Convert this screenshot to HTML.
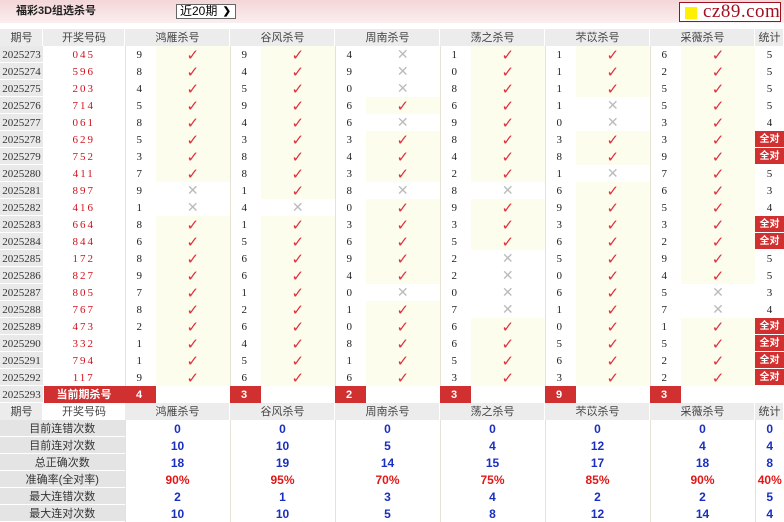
<!DOCTYPE html>
<html><head><meta charset="utf-8"><style>
*{margin:0;padding:0;box-sizing:border-box}
body{width:784px;height:519px;overflow:hidden;background:#fff;position:relative;font-family:"Liberation Serif","Noto Sans CJK SC",serif}
.bar{position:absolute;left:0;top:0;width:784px;height:23px;background:linear-gradient(#f4d6d7,#fbeeee)}
.tt{position:absolute;left:16px;top:4px;font:bold 11px/14px "Liberation Sans","Noto Sans CJK SC",sans-serif;color:#222}
.sel{position:absolute;left:176px;top:4px;width:60px;height:15px;border:1px solid #666;background:#fff;font:12px/13px "Liberation Sans","Noto Sans CJK SC",sans-serif;padding-left:3px}
.sel b{position:absolute;right:4px;top:0;font-size:10px}
.logo{position:absolute;left:679px;top:2px;width:102px;height:20px;border:1px solid #a01020;background:#fff;font:19px/18px "Liberation Serif",serif;color:#a01020;padding-left:23px;letter-spacing:0.5px}
.logo i{position:absolute;left:5px;top:4px;width:12px;height:12px;background:#ffef00}
table{position:absolute;left:0;top:29px;border-collapse:collapse;table-layout:fixed;width:784px}
tr{height:17px}
td{height:17px;max-height:17px;line-height:16px;padding:0;text-align:center;font-size:11px;color:#222;white-space:nowrap;overflow:hidden}
.h td{background:#ececec;box-shadow:inset -1px 0 #fff;font-family:"Liberation Sans","Noto Sans CJK SC",sans-serif;color:#444}
.p{background:#e9e9e9;box-shadow:inset 0 -1px #fff;color:#333}
.k{color:#d0101a;letter-spacing:2px}
.n{border-left:1px solid #e6e3d6;text-align:left;padding-left:11px}
.y{background:#fdfdee;color:#e0303c;font:15px/16px "DejaVu Sans",sans-serif}
.w{color:#bbb;font:14px/16px "DejaVu Sans",sans-serif}
.a{background:#d03030;color:#fff;font:bold 10px/16px "Liberation Sans","Noto Sans CJK SC",sans-serif;box-shadow:inset 0 -1px #fff}
.cur{background:#d03030;color:#fff;font:bold 11px/16px "Liberation Sans","Noto Sans CJK SC",sans-serif;box-shadow:inset 1px 0 #fff}
.cn{background:#d03030;color:#fff;font:bold 11px/16px "Liberation Sans",sans-serif;text-align:left;padding-left:11px}
.l{background:#e4e4e4;box-shadow:inset 0 -1px #fff;font-family:"Liberation Sans","Noto Sans CJK SC",sans-serif;color:#333}
.v{font:bold 12px/16px "Liberation Sans",sans-serif;color:#1a2fc0;border-left:1px solid #e6e3d6}
.r{color:#e01818}
</style></head><body>
<div class="bar"></div>
<div class="tt">福彩3D组选杀号</div>
<div class="sel">近20期<b>&#10095;</b></div>
<div class="logo"><i></i>cz89.com</div>
<table>
<colgroup><col style="width:43px"><col style="width:82px">
<col style="width:31px"><col style="width:74px"><col style="width:31px"><col style="width:74px"><col style="width:31px"><col style="width:74px"><col style="width:31px"><col style="width:74px"><col style="width:31px"><col style="width:74px"><col style="width:31px"><col style="width:74px"><col style="width:29px"></colgroup>
<tr class="h"><td>期号</td><td>开奖号码</td><td colspan="2">鸿雁杀号</td><td colspan="2">谷风杀号</td><td colspan="2">周南杀号</td><td colspan="2">荡之杀号</td><td colspan="2">芣苡杀号</td><td colspan="2">采薇杀号</td><td>统计</td></tr>
<tr><td class="p">2025273</td><td class="k">045</td><td class="n">9</td><td class="y">✓</td><td class="n">9</td><td class="y">✓</td><td class="n">4</td><td class="w">✕</td><td class="n">1</td><td class="y">✓</td><td class="n">1</td><td class="y">✓</td><td class="n">6</td><td class="y">✓</td><td>5</td></tr>
<tr><td class="p">2025274</td><td class="k">596</td><td class="n">8</td><td class="y">✓</td><td class="n">4</td><td class="y">✓</td><td class="n">9</td><td class="w">✕</td><td class="n">0</td><td class="y">✓</td><td class="n">1</td><td class="y">✓</td><td class="n">2</td><td class="y">✓</td><td>5</td></tr>
<tr><td class="p">2025275</td><td class="k">203</td><td class="n">4</td><td class="y">✓</td><td class="n">5</td><td class="y">✓</td><td class="n">0</td><td class="w">✕</td><td class="n">8</td><td class="y">✓</td><td class="n">1</td><td class="y">✓</td><td class="n">5</td><td class="y">✓</td><td>5</td></tr>
<tr><td class="p">2025276</td><td class="k">714</td><td class="n">5</td><td class="y">✓</td><td class="n">9</td><td class="y">✓</td><td class="n">6</td><td class="y">✓</td><td class="n">6</td><td class="y">✓</td><td class="n">1</td><td class="w">✕</td><td class="n">5</td><td class="y">✓</td><td>5</td></tr>
<tr><td class="p">2025277</td><td class="k">061</td><td class="n">8</td><td class="y">✓</td><td class="n">4</td><td class="y">✓</td><td class="n">6</td><td class="w">✕</td><td class="n">9</td><td class="y">✓</td><td class="n">0</td><td class="w">✕</td><td class="n">3</td><td class="y">✓</td><td>4</td></tr>
<tr><td class="p">2025278</td><td class="k">629</td><td class="n">5</td><td class="y">✓</td><td class="n">3</td><td class="y">✓</td><td class="n">3</td><td class="y">✓</td><td class="n">8</td><td class="y">✓</td><td class="n">3</td><td class="y">✓</td><td class="n">3</td><td class="y">✓</td><td class="a">全对</td></tr>
<tr><td class="p">2025279</td><td class="k">752</td><td class="n">3</td><td class="y">✓</td><td class="n">8</td><td class="y">✓</td><td class="n">4</td><td class="y">✓</td><td class="n">4</td><td class="y">✓</td><td class="n">8</td><td class="y">✓</td><td class="n">9</td><td class="y">✓</td><td class="a">全对</td></tr>
<tr><td class="p">2025280</td><td class="k">411</td><td class="n">7</td><td class="y">✓</td><td class="n">8</td><td class="y">✓</td><td class="n">3</td><td class="y">✓</td><td class="n">2</td><td class="y">✓</td><td class="n">1</td><td class="w">✕</td><td class="n">7</td><td class="y">✓</td><td>5</td></tr>
<tr><td class="p">2025281</td><td class="k">897</td><td class="n">9</td><td class="w">✕</td><td class="n">1</td><td class="y">✓</td><td class="n">8</td><td class="w">✕</td><td class="n">8</td><td class="w">✕</td><td class="n">6</td><td class="y">✓</td><td class="n">6</td><td class="y">✓</td><td>3</td></tr>
<tr><td class="p">2025282</td><td class="k">416</td><td class="n">1</td><td class="w">✕</td><td class="n">4</td><td class="w">✕</td><td class="n">0</td><td class="y">✓</td><td class="n">9</td><td class="y">✓</td><td class="n">9</td><td class="y">✓</td><td class="n">5</td><td class="y">✓</td><td>4</td></tr>
<tr><td class="p">2025283</td><td class="k">664</td><td class="n">8</td><td class="y">✓</td><td class="n">1</td><td class="y">✓</td><td class="n">3</td><td class="y">✓</td><td class="n">3</td><td class="y">✓</td><td class="n">3</td><td class="y">✓</td><td class="n">3</td><td class="y">✓</td><td class="a">全对</td></tr>
<tr><td class="p">2025284</td><td class="k">844</td><td class="n">6</td><td class="y">✓</td><td class="n">5</td><td class="y">✓</td><td class="n">6</td><td class="y">✓</td><td class="n">5</td><td class="y">✓</td><td class="n">6</td><td class="y">✓</td><td class="n">2</td><td class="y">✓</td><td class="a">全对</td></tr>
<tr><td class="p">2025285</td><td class="k">172</td><td class="n">8</td><td class="y">✓</td><td class="n">6</td><td class="y">✓</td><td class="n">9</td><td class="y">✓</td><td class="n">2</td><td class="w">✕</td><td class="n">5</td><td class="y">✓</td><td class="n">9</td><td class="y">✓</td><td>5</td></tr>
<tr><td class="p">2025286</td><td class="k">827</td><td class="n">9</td><td class="y">✓</td><td class="n">6</td><td class="y">✓</td><td class="n">4</td><td class="y">✓</td><td class="n">2</td><td class="w">✕</td><td class="n">0</td><td class="y">✓</td><td class="n">4</td><td class="y">✓</td><td>5</td></tr>
<tr><td class="p">2025287</td><td class="k">805</td><td class="n">7</td><td class="y">✓</td><td class="n">1</td><td class="y">✓</td><td class="n">0</td><td class="w">✕</td><td class="n">0</td><td class="w">✕</td><td class="n">6</td><td class="y">✓</td><td class="n">5</td><td class="w">✕</td><td>3</td></tr>
<tr><td class="p">2025288</td><td class="k">767</td><td class="n">8</td><td class="y">✓</td><td class="n">2</td><td class="y">✓</td><td class="n">1</td><td class="y">✓</td><td class="n">7</td><td class="w">✕</td><td class="n">1</td><td class="y">✓</td><td class="n">7</td><td class="w">✕</td><td>4</td></tr>
<tr><td class="p">2025289</td><td class="k">473</td><td class="n">2</td><td class="y">✓</td><td class="n">6</td><td class="y">✓</td><td class="n">0</td><td class="y">✓</td><td class="n">6</td><td class="y">✓</td><td class="n">0</td><td class="y">✓</td><td class="n">1</td><td class="y">✓</td><td class="a">全对</td></tr>
<tr><td class="p">2025290</td><td class="k">332</td><td class="n">1</td><td class="y">✓</td><td class="n">4</td><td class="y">✓</td><td class="n">8</td><td class="y">✓</td><td class="n">6</td><td class="y">✓</td><td class="n">5</td><td class="y">✓</td><td class="n">5</td><td class="y">✓</td><td class="a">全对</td></tr>
<tr><td class="p">2025291</td><td class="k">794</td><td class="n">1</td><td class="y">✓</td><td class="n">5</td><td class="y">✓</td><td class="n">1</td><td class="y">✓</td><td class="n">5</td><td class="y">✓</td><td class="n">6</td><td class="y">✓</td><td class="n">2</td><td class="y">✓</td><td class="a">全对</td></tr>
<tr><td class="p">2025292</td><td class="k">117</td><td class="n">9</td><td class="y">✓</td><td class="n">6</td><td class="y">✓</td><td class="n">6</td><td class="y">✓</td><td class="n">3</td><td class="y">✓</td><td class="n">3</td><td class="y">✓</td><td class="n">2</td><td class="y">✓</td><td class="a">全对</td></tr>
<tr><td class="p">2025293</td><td class="cur">当前期杀号</td><td class="cn">4</td><td></td><td class="cn">3</td><td></td><td class="cn">2</td><td></td><td class="cn">3</td><td></td><td class="cn">9</td><td></td><td class="cn">3</td><td></td><td></td></tr>
<tr class="h"><td>期号</td><td style="background:#fff">开奖号码</td><td colspan="2">鸿雁杀号</td><td colspan="2">谷风杀号</td><td colspan="2">周南杀号</td><td colspan="2">荡之杀号</td><td colspan="2">芣苡杀号</td><td colspan="2">采薇杀号</td><td>统计</td></tr>
<tr><td class="l" colspan="2">目前连错次数</td><td class="v" colspan="2">0</td><td class="v" colspan="2">0</td><td class="v" colspan="2">0</td><td class="v" colspan="2">0</td><td class="v" colspan="2">0</td><td class="v" colspan="2">0</td><td class="v">0</td></tr>
<tr><td class="l" colspan="2">目前连对次数</td><td class="v" colspan="2">10</td><td class="v" colspan="2">10</td><td class="v" colspan="2">5</td><td class="v" colspan="2">4</td><td class="v" colspan="2">12</td><td class="v" colspan="2">4</td><td class="v">4</td></tr>
<tr><td class="l" colspan="2">总正确次数</td><td class="v" colspan="2">18</td><td class="v" colspan="2">19</td><td class="v" colspan="2">14</td><td class="v" colspan="2">15</td><td class="v" colspan="2">17</td><td class="v" colspan="2">18</td><td class="v">8</td></tr>
<tr><td class="l" colspan="2">准确率(全对率)</td><td class="v r" colspan="2">90%</td><td class="v r" colspan="2">95%</td><td class="v r" colspan="2">70%</td><td class="v r" colspan="2">75%</td><td class="v r" colspan="2">85%</td><td class="v r" colspan="2">90%</td><td class="v r">40%</td></tr>
<tr><td class="l" colspan="2">最大连错次数</td><td class="v" colspan="2">2</td><td class="v" colspan="2">1</td><td class="v" colspan="2">3</td><td class="v" colspan="2">4</td><td class="v" colspan="2">2</td><td class="v" colspan="2">2</td><td class="v">5</td></tr>
<tr><td class="l" colspan="2">最大连对次数</td><td class="v" colspan="2">10</td><td class="v" colspan="2">10</td><td class="v" colspan="2">5</td><td class="v" colspan="2">8</td><td class="v" colspan="2">12</td><td class="v" colspan="2">14</td><td class="v">4</td></tr>
</table>
</body></html>
